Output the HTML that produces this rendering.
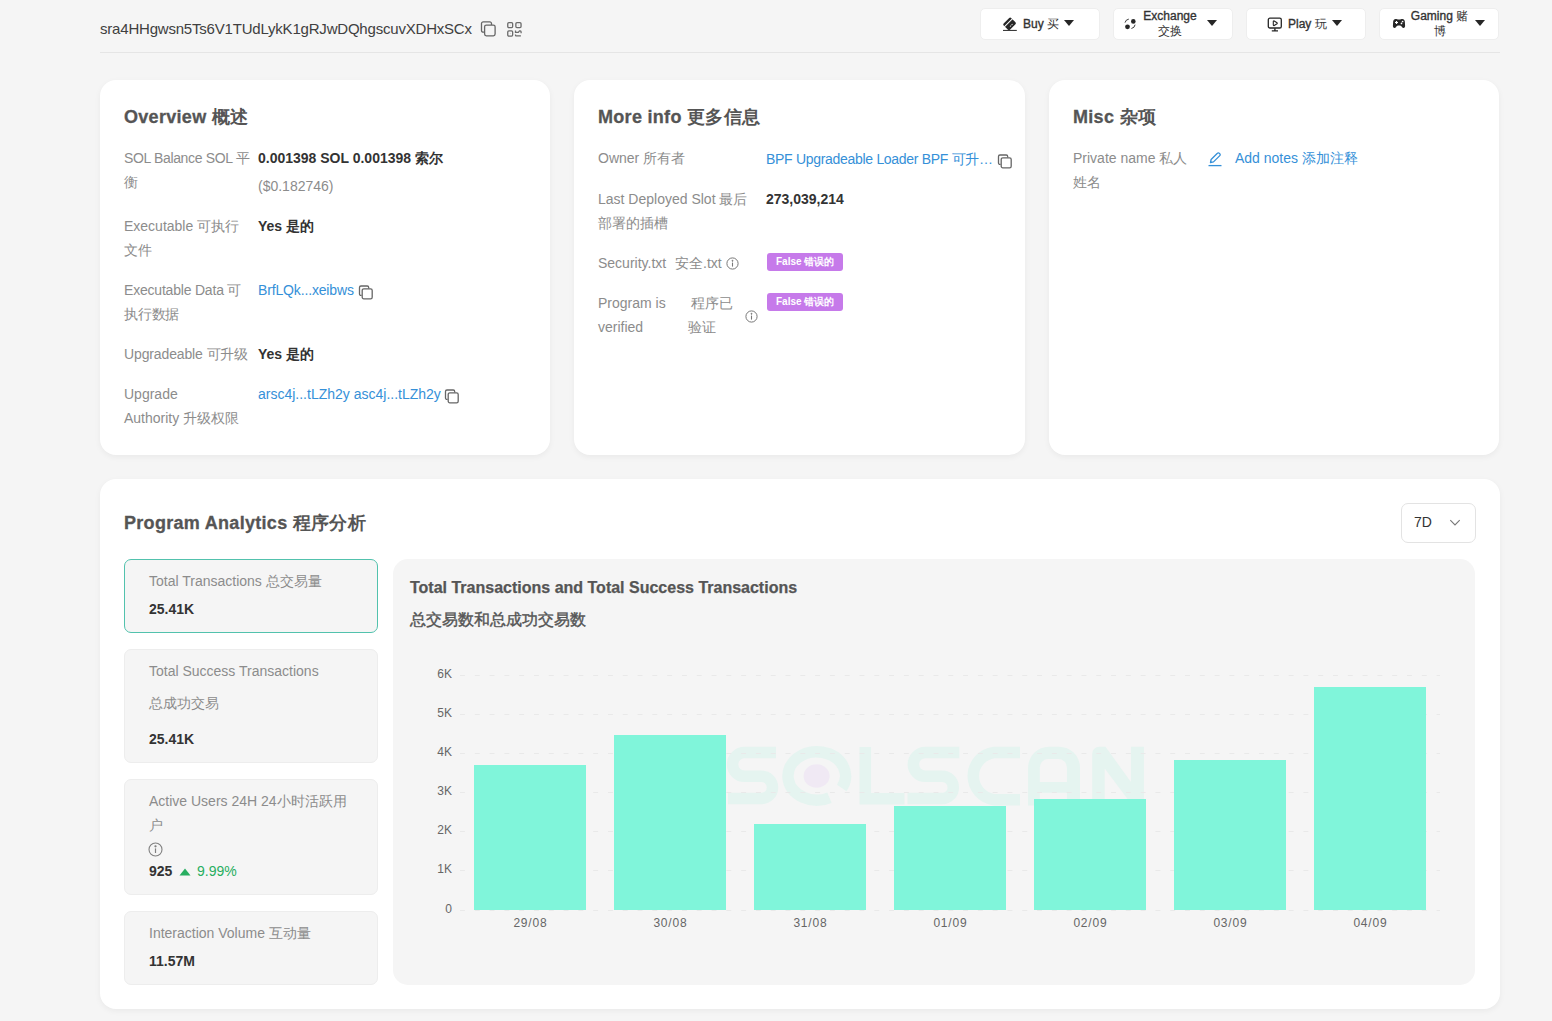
<!DOCTYPE html>
<html><head><meta charset="utf-8">
<style>
*{box-sizing:border-box;margin:0;padding:0}
html,body{width:1552px;height:1021px;overflow:hidden;background:#f5f5f5}
body{position:relative;font-family:"Liberation Sans",sans-serif;color:#333}
.a{position:absolute;white-space:nowrap}
.card{position:absolute;background:#fff;border-radius:16px;box-shadow:0 2px 6px rgba(0,0,0,0.05)}
.h{font-weight:bold;font-size:18px;color:#555;line-height:24px;letter-spacing:0.3px;-webkit-text-stroke:0.3px #555}
.lb{font-size:14px;color:#8c8c8c;line-height:24px}
.vb{font-size:14px;color:#333;font-weight:bold;line-height:24px}
.ln{font-size:14px;color:#3590d8;line-height:24px}
.btn{position:absolute;top:8px;height:31.5px;width:119.5px;background:#fff;border:1px solid #eeeeee;border-radius:5px}
.btn .t{position:absolute;font-size:12px;font-weight:normal;color:#333;white-space:nowrap;letter-spacing:0px;-webkit-text-stroke:0.35px #333}
.btn .t span{-webkit-text-stroke:0}
.tri{position:absolute;width:0;height:0;border-left:5.5px solid transparent;border-right:5.5px solid transparent;border-top:6.5px solid #262626}
.badge{font-size:10px;font-weight:bold;color:#fff;background:#c67aea;border-radius:3px;height:18px;line-height:18px;padding:0 9px;width:76px;text-align:center}
.stat{position:absolute;left:124px;width:254px;background:#f5f5f5;border-radius:7px;border:1px solid #ededed}
.yl{position:absolute;font-size:12px;color:#666;line-height:14px;text-align:right;width:30px;left:422px}
.xl{position:absolute;font-size:12px;color:#666;line-height:14px;text-align:center;width:80px;letter-spacing:0.8px;text-indent:0.8px}
.bar{position:absolute;background:#80f5da;width:112px}
.grid{position:absolute;left:460px;width:980px;height:1px;background-image:linear-gradient(to right,#e9e9e9 0,#e9e9e9 5px,transparent 5px);background-size:14.8px 1px}
</style></head>
<body>
<!-- header -->
<div class="a" style="left:100px;top:20px;font-size:15px;line-height:18px;color:#404040;letter-spacing:-0.2px">sra4HHgwsn5Ts6V1TUdLykK1gRJwDQhgscuvXDHxSCx</div>
<div class="a" style="left:100px;top:52px;width:1400px;height:1px;background:#e5e5e5"></div>

<svg class="a" style="left:480px;top:20px" width="17" height="17" viewBox="0 0 17 17" fill="none" stroke="#666" stroke-width="1.3">
<path d="M4 12.2H3.2A1.7 1.7 0 0 1 1.5 10.5V3.6A1.7 1.7 0 0 1 3.2 1.9H9.8A1.7 1.7 0 0 1 11.5 3.6V5"/>
<rect x="4.6" y="5.1" width="10.5" height="10.7" rx="1.7"/>
</svg>
<svg class="a" style="left:506px;top:20px" width="18" height="18" viewBox="0 0 18 18" fill="none" stroke="#6b6b6b" stroke-width="1.3">
<rect x="1.75" y="2.7" width="4.9" height="4.9" rx="1.1"/><rect x="9.85" y="2.7" width="5.2" height="4.9" rx="1.1"/><rect x="1.75" y="10.85" width="4.9" height="5.2" rx="1.1"/>
<path d="M9.5 10.4V12.3H12.3L13.5 10.9H14.2A1 1 0 0 1 15.1 11.9V13.2"/><path d="M9.5 14.4V15.2A0.6 0.6 0 0 0 10.1 15.8H14.9"/>
<circle cx="4.2" cy="5.1" r="0.4" fill="#999" stroke="none"/><circle cx="12.5" cy="5.1" r="0.4" fill="#999" stroke="none"/><circle cx="4.2" cy="13.4" r="0.4" fill="#999" stroke="none"/>
</svg>

<div class="btn" style="left:980px">
<svg class="a" style="left:21px;top:7px" width="16" height="16" viewBox="0 0 16 16"><g transform="rotate(-45 8.2 8)"><rect x="2.6" y="2.95" width="10.6" height="8.9" rx="1.4" fill="#262626"/><rect x="2" y="5.35" width="12" height="0.95" fill="#fff"/><path d="M6.3 9.7h1.2M8.3 9.7h1.6" stroke="#ccc" stroke-width="1"/></g><rect x="1" y="13.9" width="13.8" height="1" fill="#262626"/></svg>
<div class="t" style="left:42px;top:7px;line-height:16px">Buy <span>买</span></div>
<div class="tri" style="left:83px;top:11px"></div>
</div>
<div class="btn" style="left:1113px">
<svg class="a" style="left:10.2px;top:9px" width="13" height="13" viewBox="0 0 13 13"><circle cx="9.3" cy="3.4" r="2.3" fill="#262626"/><circle cx="3.5" cy="8.8" r="2.4" fill="#262626"/><path d="M1 4.6A4.6 4.6 0 0 1 4.8 1.1" stroke="#262626" stroke-width="0.9" fill="none"/><path d="M7.4 10.5A4.6 4.6 0 0 0 11.1 6.7" stroke="#262626" stroke-width="0.9" fill="none"/></svg>
<div class="t" style="left:29px;top:-0.5px;line-height:15px;text-align:center;width:54px">Exchange<br><span>交换</span></div>
<div class="tri" style="left:93px;top:11px"></div>
</div>
<div class="btn" style="left:1246px">
<svg class="a" style="left:20px;top:8px" width="16" height="16" viewBox="0 0 16 16" fill="none" stroke="#262626" stroke-width="1.3"><rect x="1.3" y="1.2" width="13" height="9.8" rx="1.6"/><path d="M6.3 4.4v3.6a0.6 0.6 0 0 0 0.9 0.5l2.8-1.7a0.6 0.6 0 0 0 0-1l-2.8-1.8a0.6 0.6 0 0 0-0.9 0.4z" stroke-width="1.1" stroke-linejoin="round"/><path d="M7.9 11.3v2.3M4.8 13.9h6.2" stroke-width="1.4"/></svg>
<div class="t" style="left:41px;top:7px;line-height:16px">Play <span>玩</span></div>
<div class="tri" style="left:85px;top:11px"></div>
</div>
<div class="btn" style="left:1379px">
<svg class="a" style="left:11.5px;top:9px" width="14" height="11" viewBox="0 0 14 11"><path d="M3.6 0.9C4.6 0.9 5.5 1.4 7 1.4C8.5 1.4 9.4 0.9 10.4 0.9C11.8 0.9 12.6 1.9 12.8 3.3L13.1 7.8C13.2 9 12.5 9.9 11.6 9.9C10.9 9.9 10.4 9.5 9.9 8.9L9.4 8.3C9 7.9 8.5 7.6 7.9 7.6H6.1C5.5 7.6 5 7.9 4.6 8.3L4.1 8.9C3.6 9.5 3.1 9.9 2.4 9.9C1.5 9.9 0.8 9 0.9 7.8L1.2 3.3C1.4 1.9 2.2 0.9 3.6 0.9Z" fill="#262626"/><path d="M4.5 3v3M3 4.5h3" stroke="#fff" stroke-width="1.2"/><circle cx="10.6" cy="3.5" r="0.85" fill="#fff"/><circle cx="9.5" cy="5.4" r="0.85" fill="#fff"/></svg>
<div class="t" style="left:30.5px;top:-0.5px;line-height:15px;text-align:center;width:58px">Gaming <span>赌</span><br><span>博</span></div>
<div class="tri" style="left:95px;top:11px"></div>
</div>

<!-- cards -->
<div class="card" style="left:100px;top:80px;width:450px;height:375px"></div>
<div class="card" style="left:574px;top:80px;width:451px;height:375px"></div>
<div class="card" style="left:1049px;top:80px;width:450px;height:375px"></div>


<!-- overview -->
<div class="a h" style="left:124px;top:105px">Overview <span style="-webkit-text-stroke:0">概述</span></div>
<div class="a lb" style="left:124px;top:146px;letter-spacing:-0.35px">SOL Balance SOL 平<br>衡</div>
<div class="a vb" style="left:258px;top:146px">0.001398 SOL 0.001398 索尔</div>
<div class="a lb" style="left:258px;top:174px">($0.182746)</div>
<div class="a lb" style="left:124px;top:214px">Executable 可执行<br>文件</div>
<div class="a vb" style="left:258px;top:214px">Yes 是的</div>
<div class="a lb" style="left:124px;top:278px;letter-spacing:-0.2px">Executable Data 可<br>执行数据</div>
<div class="a ln" style="left:258px;top:278px;letter-spacing:-0.15px">BrfLQk...xeibws</div>
<svg class="a cp" style="left:358px;top:284px" width="16" height="16" viewBox="0 0 16 16" fill="none" stroke="#666" stroke-width="1.3"><path d="M3.6 11.4H3A1.5 1.5 0 0 1 1.5 9.9V3.5A1.5 1.5 0 0 1 3 2H9.2A1.5 1.5 0 0 1 10.7 3.5V4.5"/><rect x="4.2" y="4.8" width="10" height="10" rx="1.6"/></svg>
<div class="a lb" style="left:124px;top:342px;letter-spacing:-0.13px">Upgradeable 可升级</div>
<div class="a vb" style="left:258px;top:342px">Yes 是的</div>
<div class="a lb" style="left:124px;top:382px">Upgrade<br>Authority 升级权限</div>
<div class="a ln" style="left:258px;top:382px">arsc4j...tLZh2y asc4j...tLZh2y</div>
<svg class="a cp" style="left:444px;top:388px" width="16" height="16" viewBox="0 0 16 16" fill="none" stroke="#666" stroke-width="1.3"><path d="M3.6 11.4H3A1.5 1.5 0 0 1 1.5 9.9V3.5A1.5 1.5 0 0 1 3 2H9.2A1.5 1.5 0 0 1 10.7 3.5V4.5"/><rect x="4.2" y="4.8" width="10" height="10" rx="1.6"/></svg>

<!-- more info -->
<div class="a h" style="left:598px;top:105px">More info <span style="-webkit-text-stroke:0">更多信息</span></div>
<div class="a lb" style="left:598px;top:146px">Owner 所有者</div>
<div class="a ln" style="left:766px;top:147px;letter-spacing:-0.3px">BPF Upgradeable Loader BPF 可升…</div>
<svg class="a cp" style="left:997px;top:153px" width="16" height="16" viewBox="0 0 16 16" fill="none" stroke="#666" stroke-width="1.3"><path d="M3.6 11.4H3A1.5 1.5 0 0 1 1.5 9.9V3.5A1.5 1.5 0 0 1 3 2H9.2A1.5 1.5 0 0 1 10.7 3.5V4.5"/><rect x="4.2" y="4.8" width="10" height="10" rx="1.6"/></svg>
<div class="a lb" style="left:598px;top:187px">Last Deployed Slot 最后<br>部署的插槽</div>
<div class="a vb" style="left:766px;top:187px">273,039,214</div>
<div class="a lb" style="left:598px;top:251px">Security.txt</div>
<div class="a lb" style="left:675px;top:251px">安全.txt</div>
<svg class="a" style="left:726px;top:257px" width="13" height="13" viewBox="0 0 13 13" fill="none" stroke="#777" stroke-width="1"><circle cx="6.5" cy="6.5" r="5.6"/><path d="M6.5 5.6v4" stroke-width="1.1"/><circle cx="6.5" cy="3.8" r="0.5" fill="#777"/></svg>
<div class="a badge" style="left:767px;top:253px">False 错误的</div>
<div class="a lb" style="left:598px;top:291px">Program is<br>verified</div>
<div class="a lb" style="left:688px;top:291px"><span style="padding-left:3px">程序已</span><br>验证</div>
<svg class="a" style="left:745px;top:310px" width="13" height="13" viewBox="0 0 13 13" fill="none" stroke="#777" stroke-width="1"><circle cx="6.5" cy="6.5" r="5.6"/><path d="M6.5 5.6v4" stroke-width="1.1"/><circle cx="6.5" cy="3.8" r="0.5" fill="#777"/></svg>
<div class="a badge" style="left:767px;top:293px">False 错误的</div>

<!-- misc -->
<div class="a h" style="left:1073px;top:105px">Misc <span style="-webkit-text-stroke:0">杂项</span></div>
<div class="a lb" style="left:1073px;top:146px">Private name 私人<br>姓名</div>
<svg class="a" style="left:1207px;top:151px" width="16" height="16" viewBox="0 0 16 16" fill="none" stroke="#3590d8" stroke-width="1.3" stroke-linejoin="round"><path d="M3.5 11.5l0.6-3L10.4 2.2a1.3 1.3 0 0 1 1.9 0l0.5 0.5a1.3 1.3 0 0 1 0 1.9L6.5 10.9z"/><path d="M1.5 14.6h13"/></svg>
<div class="a ln" style="left:1235px;top:146px">Add notes 添加注释</div>
<div class="card" style="left:100px;top:479px;width:1400px;height:530px"></div>
<div class="a" style="left:393px;top:559px;width:1082px;height:426px;background:#f5f5f5;border-radius:15px"></div>


<!-- analytics -->
<div class="a h" style="left:124px;top:511px">Program Analytics <span style="-webkit-text-stroke:0">程序分析</span></div>
<div class="a" style="left:1401px;top:503px;width:75px;height:40px;border:1px solid #e3e3e3;border-radius:7px;background:#fff"></div>
<div class="a" style="left:1414px;top:510px;font-size:14px;line-height:24px;color:#333">7D</div>
<svg class="a" style="left:1449px;top:518px" width="12" height="9" viewBox="0 0 12 9" fill="none" stroke="#777" stroke-width="1.1"><path d="M1.3 2.2l4.7 4.7 4.7-4.7"/></svg>

<div class="stat" style="top:559px;height:74px;border:1px solid #52c2ad"></div>
<div class="a lb" style="left:149px;top:569px">Total Transactions 总交易量</div>
<div class="a vb" style="left:149px;top:597px">25.41K</div>

<div class="stat" style="top:649px;height:114px"></div>
<div class="a lb" style="left:149px;top:659px">Total Success Transactions</div>
<div class="a lb" style="left:149px;top:691px">总成功交易</div>
<div class="a vb" style="left:149px;top:727px">25.41K</div>

<div class="stat" style="top:779px;height:116px"></div>
<div class="a lb" style="left:149px;top:789px">Active Users 24H 24小时活跃用<br>户</div>
<svg class="a" style="left:148px;top:842px" width="15" height="15" viewBox="0 0 15 15" fill="none" stroke="#808080" stroke-width="1.1"><circle cx="7.5" cy="7.5" r="6.5"/><path d="M7.5 6.4v4.6" stroke-width="1.2"/><circle cx="7.5" cy="4.3" r="0.6" fill="#808080"/></svg>
<div class="a vb" style="left:149px;top:859px">925</div>
<svg class="a" style="left:179px;top:868px" width="12" height="8" viewBox="0 0 12 8"><path d="M6 0.5L11.5 7.5H0.5Z" fill="#27ae60"/></svg>
<div class="a" style="left:197px;top:859px;font-size:14px;line-height:24px;color:#27ae60">9.99%</div>

<div class="stat" style="top:911px;height:74px"></div>
<div class="a lb" style="left:149px;top:921px">Interaction Volume 互动量</div>
<div class="a vb" style="left:149px;top:949px">11.57M</div>

<div class="a" style="left:410px;top:576px;font-size:16px;font-weight:bold;color:#555;line-height:24px;-webkit-text-stroke:0.25px #555">Total Transactions and Total Success Transactions</div>
<div class="a" style="left:410px;top:608px;font-size:16px;font-weight:normal;-webkit-text-stroke:0.4px #555;color:#555;line-height:24px">总交易数和总成功交易数</div>
<svg class="a" style="left:0;top:0" width="1552" height="1021" viewBox="0 0 1552 1021" fill="none" stroke="#e5f4f0" stroke-width="11.5">
<path d="M776 752.5H744.5A11.9 11.9 0 0 0 744.5 776.3H761.4A11.1 11.1 0 0 1 761.4 798.5H728"/>
<path d="M829.5 797.7A28.8 24.2 0 1 1 841.8 788"/>
<path d="M865.3 747V798.7H904.5"/>
<path d="M959.3 752.5H925.3A11.9 11.9 0 0 0 925.3 776.3H942.2A11.1 11.1 0 0 1 942.2 798.5H907.5"/>
<path d="M1020 752.5H994A23.8 23.8 0 0 0 994 799.7H1020"/>
<path stroke="none" fill="#e5f4f0" fill-rule="evenodd" d="M1028.1 805.5V767.7A21 21 0 0 1 1049.1 746.7H1059A21 21 0 0 1 1080 767.7V805.5H1066.9V792.7H1039.8V805.5ZM1039.8 781.9H1066.9V767.4A8.5 8.5 0 0 0 1058.4 758.9H1048.3A8.5 8.5 0 0 0 1039.8 767.4Z"/>
<path stroke="none" fill="#e5f4f0" d="M1092.2 805.5V753.7A7 7 0 0 1 1099.2 746.7H1105.5L1130.9 782V746.7H1143.9V805.5H1132.5L1104.7 768.4V805.5Z"/>
<ellipse cx="816.6" cy="776" rx="13" ry="11.8" fill="#f0e9f4" stroke="none"/>
</svg>
<div class="grid" style="top:675px"></div>
<div class="yl" style="top:667px">6K</div>
<div class="grid" style="top:714px"></div>
<div class="yl" style="top:706px">5K</div>
<div class="grid" style="top:753px"></div>
<div class="yl" style="top:745px">4K</div>
<div class="grid" style="top:792px"></div>
<div class="yl" style="top:784px">3K</div>
<div class="grid" style="top:831px"></div>
<div class="yl" style="top:823px">2K</div>
<div class="grid" style="top:870px"></div>
<div class="yl" style="top:862px">1K</div>
<div class="grid" style="top:910px"></div>
<div class="yl" style="top:902px">0</div>
<div class="bar" style="left:474px;top:765px;height:145px"></div>
<div class="xl" style="left:490px;top:916px">29/08</div>
<div class="bar" style="left:614px;top:735px;height:175px"></div>
<div class="xl" style="left:630px;top:916px">30/08</div>
<div class="bar" style="left:754px;top:824px;height:86px"></div>
<div class="xl" style="left:770px;top:916px">31/08</div>
<div class="bar" style="left:894px;top:806px;height:104px"></div>
<div class="xl" style="left:910px;top:916px">01/09</div>
<div class="bar" style="left:1034px;top:799px;height:111px"></div>
<div class="xl" style="left:1050px;top:916px">02/09</div>
<div class="bar" style="left:1174px;top:760px;height:150px"></div>
<div class="xl" style="left:1190px;top:916px">03/09</div>
<div class="bar" style="left:1314px;top:687px;height:223px"></div>
<div class="xl" style="left:1330px;top:916px">04/09</div>
</body></html>
